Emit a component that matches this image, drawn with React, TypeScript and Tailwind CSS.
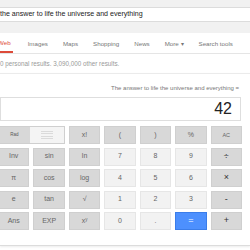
const tabs = [
  { label: "Web", active: true },
  { label: "Images" },
  { label: "Maps" },
  { label: "Shopping" },
  { label: "News" },
  { label: "More ▾" },
  { label: "Search tools" },
];

type Key = { label: React.ReactNode; kind: "fn" | "num" | "op" | "eq" };

const keys: Key[] = [
  { label: "x!", kind: "fn" },
  { label: "(", kind: "fn" },
  { label: ")", kind: "fn" },
  { label: "%", kind: "fn" },
  { label: <span className="text-[5.5px]">AC</span>, kind: "fn" },
  { label: "Inv", kind: "fn" },
  { label: "sin", kind: "fn" },
  { label: "ln", kind: "fn" },
  { label: "7", kind: "num" },
  { label: "8", kind: "num" },
  { label: "9", kind: "num" },
  { label: "÷", kind: "op" },
  { label: "π", kind: "fn" },
  { label: "cos", kind: "fn" },
  { label: "log", kind: "fn" },
  { label: "4", kind: "num" },
  { label: "5", kind: "num" },
  { label: "6", kind: "num" },
  { label: "×", kind: "op" },
  { label: "e", kind: "fn" },
  { label: "tan", kind: "fn" },
  { label: "√", kind: "fn" },
  { label: "1", kind: "num" },
  { label: "2", kind: "num" },
  { label: "3", kind: "num" },
  { label: "-", kind: "op" },
  { label: "Ans", kind: "fn" },
  { label: "EXP", kind: "fn" },
  {
    label: (
      <span>
        x<sup className="text-[4.5px]">y</sup>
      </span>
    ),
    kind: "fn",
  },
  { label: "0", kind: "num" },
  { label: ".", kind: "num" },
  { label: "=", kind: "eq" },
  { label: "+", kind: "op" },
];

const keyStyle = {
  fn: "bg-[#d8d8d8] border-[#cfcfcf] text-[#666]",
  num: "bg-[#f2f2f2] border-[#e6e6e6] text-[#666]",
  op: "bg-[#d8d8d8] border-[#cfcfcf] text-[#333] text-[9px]",
  eq: "bg-[#4d90fe] border-[#3b7de9] text-white text-[9px]",
};

export default function App() {
  return (
    <div className="w-[250px] h-[250px] overflow-hidden bg-white font-['Liberation_Sans',Arial,sans-serif]">
      <div className="h-[33px] bg-[#f1f1f1] pt-[7px]">
        <div className="h-[15px] bg-white border-y border-[#dcdcdc] flex items-center">
          <span className="text-[7.1px] text-[#222] whitespace-nowrap">
            the answer to life the universe and everything
          </span>
        </div>
      </div>

      <div className="h-[21px] border-b border-[#e5e5e5] flex items-stretch ml-[-2px] gap-[15px] text-[6.2px] text-[#777]">
        {tabs.map((t) => (
          <div
            key={t.label}
            className={
              t.active
                ? "flex items-center pt-[1px] border-b-2 border-[#dd4b39] text-[#dd4b39] pr-[2px]"
                : "flex items-center pt-[1px]"
            }
          >
            {t.label}
          </div>
        ))}
      </div>

      <div className="h-[19px] flex items-center text-[6.3px] text-[#999] whitespace-nowrap">
        0 personal results. 3,090,000 other results.
      </div>

      <div className="border-t border-[#ebebeb] border-b border-b-[#dcdcdc] shadow-[0_1px_2px_rgba(0,0,0,0.08)] h-[173px]">
        <div className="w-[241px]">
          <div className="h-[23px] flex items-end justify-end pb-[4px] pr-[2px] text-[6px] text-[#777] whitespace-nowrap">
            The answer to life the universe and everything =
          </div>
          <div className="h-[24px] border border-[#dedede] flex items-center justify-end pr-[8px] text-[16px] text-[#222]">
            42
          </div>
        </div>

        <div className="mt-[5px] ml-[-2px] w-[244px] grid grid-cols-7 gap-x-[4px] gap-y-[3.5px]">
          <div className="col-span-2 h-[18px] flex border border-[#cfcfcf]">
            <div className="w-[31px] bg-[#d8d8d8] flex items-center justify-center text-[4.5px] text-[#555]">
              Rad
            </div>
            <div className="flex-1 bg-[#f4f4f4] flex flex-col items-center justify-center gap-[1.5px]">
              <div className="w-[12px] h-px bg-[#dadada]" />
              <div className="w-[12px] h-px bg-[#dadada]" />
              <div className="w-[12px] h-px bg-[#dadada]" />
              <div className="w-[12px] h-px bg-[#dadada]" />
            </div>
          </div>
          {keys.map((k, i) => (
            <div
              key={i}
              className={`h-[18px] border flex items-center justify-center text-[7px] ${keyStyle[k.kind]}`}
            >
              {k.label}
            </div>
          ))}
        </div>
      </div>
    </div>
  );
}
